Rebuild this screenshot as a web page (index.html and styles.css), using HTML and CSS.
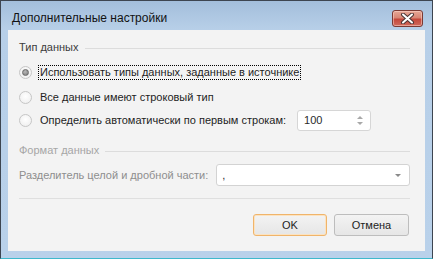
FILE: index.html
```html
<!DOCTYPE html>
<html lang="ru">
<head>
    <meta charset="UTF-8">
    <title>Дополнительные настройки</title>
    <link rel="stylesheet" href="styles.css">
</head>
<body>
    <div class="window">
        <div class="titlebar">
            <span class="title">Дополнительные настройки</span>
            <button class="close" aria-label="Закрыть">
                <svg width="15" height="11" viewBox="0 0 15 11">
                    <path d="M3 1.5 L12 9.5 M12 1.5 L3 9.5" stroke="#4a3434" stroke-width="4" stroke-linecap="round"/>
                    <path d="M3 1.5 L12 9.5 M12 1.5 L3 9.5" stroke="#fff" stroke-width="2" stroke-linecap="round"/>
                </svg>
            </button>
        </div>

        <div class="frame">
            <div class="client">
                <div class="group-title">
                    <span>Тип данных</span>
                </div>

                <label class="radio-row first">
                    <span class="radio checked"></span>
                    <span class="label focus">Использовать типы данных, заданные в источнике</span>
                </label>
                <label class="radio-row">
                    <span class="radio"></span>
                    <span class="label">Все данные имеют строковый тип</span>
                </label>
                <label class="radio-row last">
                    <span class="radio"></span>
                    <span class="label">Определить автоматически по первым строкам:</span>
                    <span class="spin">
                        <span class="spin-value">100</span>
                        <span class="spin-arrows">
                            <span class="up"></span>
                            <span class="down"></span>
                        </span>
                    </span>
                </label>

                <div class="group-title disabled">
                    <span>Формат данных</span>
                </div>

                <div class="field-row">
                    <span class="field-label">Разделитель целой и дробной части:</span>
                    <span class="combo">
                        <span class="combo-value">,</span>
                        <span class="combo-arrow"></span>
                    </span>
                </div>

                <div class="separator"></div>

                <div class="buttons">
                    <button class="btn default">OK</button>
                    <button class="btn">Отмена</button>
                </div>
            </div>
        </div>
    </div>
</body>
</html>
```

FILE: styles.css
```css
body {
    margin: 0;
    font-family: 'Liberation Sans', Arial, sans-serif;
    font-size: 11px;
    color: #1e1e1e;
}

.window {
    width: 433px;
    height: 259px;
    box-sizing: border-box;
    border: 1px solid #3d4550;
    border-bottom-color: #3fb9cc;
    background: linear-gradient(#a3bedb, #b7cfe8 28px, #b9d1ea);
    display: flex;
    flex-direction: column;
}

.titlebar {
    height: 29px;
    box-sizing: border-box;
    padding: 9px 9px 0 11px;
    display: flex;
    justify-content: space-between;
    align-items: flex-start;
}

.title {
    line-height: 17px;
    font-size: 12px;
    color: #121212;
}

.close {
    width: 31px;
    height: 17px;
    margin: 0;
    padding: 0;
    border: 1px solid #7a3a34;
    border-radius: 3px;
    background: linear-gradient(#e6a796, #d88675 45%, #c4483b 55%, #d06a5c);
    display: flex;
    justify-content: center;
    align-items: center;
    box-shadow: inset 0 0 0 1px rgba(255, 220, 210, 0.5);
}

.frame {
    flex: 1;
    padding: 0 7px 7px 7px;
    display: flex;
}

.client {
    flex: 1;
    background: #f3f3f3;
    padding: 10px 15px 0 11px;
}

.group-title {
    display: flex;
    align-items: center;
    height: 14px;
    color: #3c3c3c;
}

.group-title::after {
    content: "";
    flex: 1;
    height: 1px;
    background: #dcdcdc;
    margin-left: 6px;
    margin-top: 2px;
}

.group-title.disabled {
    color: #a6a6a6;
    margin-top: 12px;
}

.radio-row {
    display: flex;
    align-items: center;
    height: 24px;
    white-space: nowrap;
}

.radio-row.first {
    margin-top: 6px;
    height: 25px;
}

.radio-row.last {
    height: 22px;
}

.radio {
    width: 11px;
    height: 11px;
    border-radius: 50%;
    border: 1px solid #c6c6c6;
    background: radial-gradient(circle at 50% 40%, #ffffff, #ececec);
    margin-right: 6px;
    display: flex;
    justify-content: center;
    align-items: center;
}

.radio.checked::before {
    content: "";
    width: 5px;
    height: 5px;
    border-radius: 50%;
    border: 1px solid #6a6a6a;
    background: radial-gradient(circle at 40% 35%, #b8b8b8, #7a7a7a);
}

.label {
    line-height: 13px;
    padding: 0 1px;
    border: 1px dotted transparent;
}

.label.focus {
    border-color: #000;
}

.spin {
    margin-left: 9px;
    width: 74px;
    height: 21px;
    box-sizing: border-box;
    border: 1px solid #d6d6d6;
    border-radius: 3px;
    background: #fff;
    display: flex;
    align-items: center;
    justify-content: space-between;
    padding: 0 7px 0 6px;
}

.spin-value {
    color: #2a2a2a;
}

.spin-arrows {
    display: flex;
    flex-direction: column;
    gap: 3px;
}

.spin-arrows .up {
    border: 3px solid transparent;
    border-top: 0;
    border-bottom: 3px solid #a8a8a8;
}

.spin-arrows .down {
    border: 3px solid transparent;
    border-bottom: 0;
    border-top: 3px solid #a8a8a8;
}

.field-row {
    display: flex;
    align-items: center;
    margin-top: 7px;
    height: 22px;
    white-space: nowrap;
}

.field-label {
    color: #8e8e8e;
    margin-right: 8px;
}

.combo {
    flex: 1;
    height: 22px;
    box-sizing: border-box;
    border: 1px solid #d3d3d3;
    border-radius: 3px;
    background: #fff;
    display: flex;
    align-items: center;
    justify-content: space-between;
    padding: 0 8px 0 5px;
}

.combo-value {
    color: #2a2a2a;
}

.combo-arrow {
    border: 3px solid transparent;
    border-bottom: 0;
    border-top: 3px solid #8a8a8a;
}

.separator {
    height: 1px;
    background: #dfdfdf;
    margin-top: 12px;
}

.buttons {
    display: flex;
    justify-content: flex-end;
    gap: 7px;
    margin-top: 15px;
    padding-right: 1px;
}

.btn {
    width: 75px;
    height: 22px;
    margin: 0;
    padding: 0;
    font-family: inherit;
    font-size: 11px;
    color: #1e1e1e;
    border: 1px solid #bdbdbd;
    border-radius: 3px;
    background: linear-gradient(#f3f3f3, #e6e6e6);
}

.btn.default {
    width: 74px;
    border-color: #f0b46a;
    box-shadow: inset 0 0 0 1px #fbe3c2;
}
```
